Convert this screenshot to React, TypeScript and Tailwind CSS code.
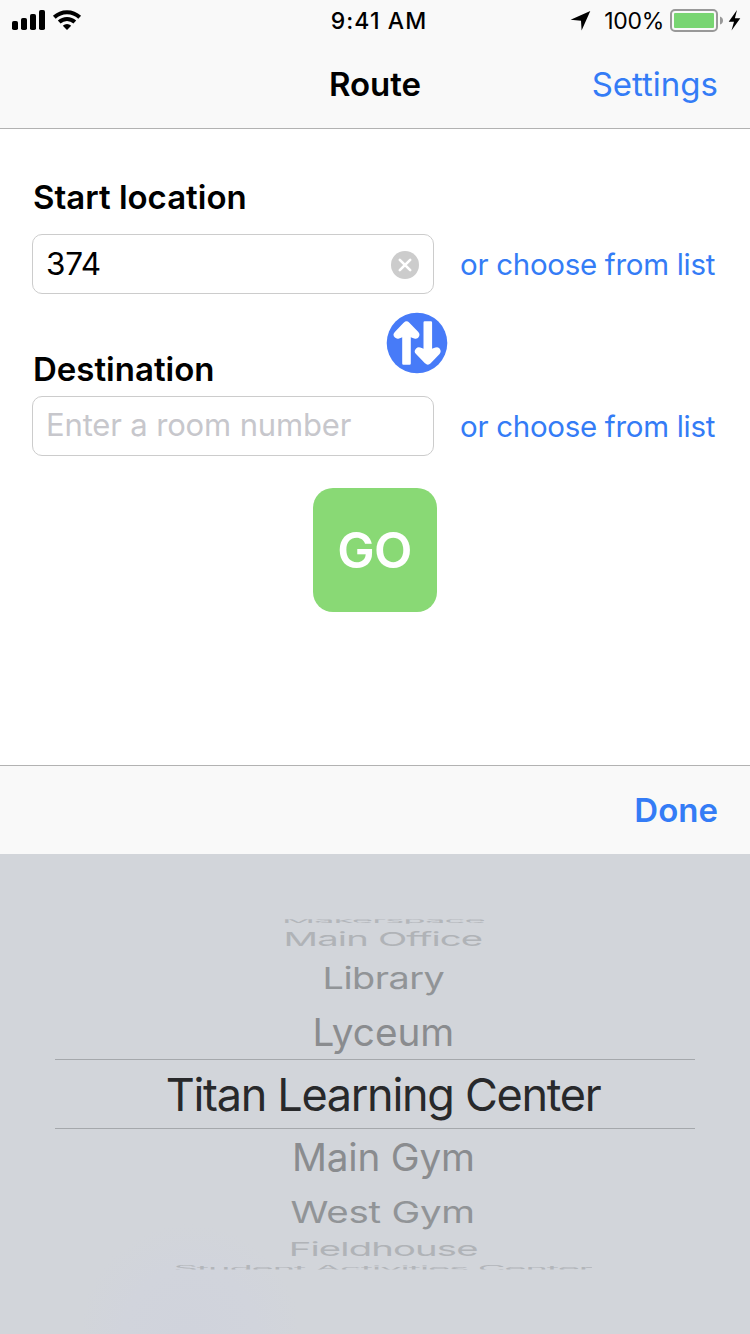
type WheelItem = { label: string; row: string; text: string };

const above: WheelItem[] = [
  { label: "Makerspace", row: "h-[13px]", text: "text-[#b3b6ba] tracking-[-1.3px] [transform:scale(0.815,0.14)] [clip-path:inset(14px_0_0_0)]" },
  { label: "Main Office", row: "h-[24px]", text: "text-[#b0b3b7] tracking-[-1px] [transform:scale(0.85,0.42)]" },
  { label: "Library", row: "h-[52px]", text: "text-[#919497] tracking-[-0.6px] [transform:scale(0.84,0.67)]" },
  { label: "Lyceum", row: "h-[56px]", text: "text-[#8a8c8f] [transform:scale(0.86,0.86)]" },
];

const below: WheelItem[] = [
  { label: "Main Gym", row: "h-[56px] pb-[2px]", text: "text-[#8a8c8f] tracking-[-0.2px] [transform:scale(0.86,0.86)]" },
  { label: "West Gym", row: "h-[52px]", text: "text-[#919497] tracking-[-0.3px] [transform:scale(0.855,0.67)]" },
  { label: "Fieldhouse", row: "h-[25px]", text: "text-[#b0b3b7] tracking-[-1px] [transform:scale(0.85,0.42)]" },
  { label: "Student Activities Center", row: "h-[12px]", text: "text-[#b3b6ba] tracking-[-1.3px] [transform:scale(0.845,0.16)] [clip-path:inset(0_0_16px_0)]" },
];

function WheelRow({ item }: { item: WheelItem }) {
  return (
    <div className={`flex items-center justify-center pl-[16px] ${item.row}`}>
      <span className={`whitespace-nowrap text-[45px] leading-none ${item.text}`}>{item.label}</span>
    </div>
  );
}

function StatusBar() {
  return (
    <div className="grid h-[41px] grid-cols-[1fr_auto_1fr] items-start">
      <svg className="h-[41px] w-[90px]" viewBox="0 0 90 41">
        <rect x="12" y="21" width="6" height="9" rx="1.8" />
        <rect x="21" y="18" width="6" height="12" rx="1.8" />
        <rect x="30" y="14" width="6" height="16" rx="1.8" />
        <rect x="39" y="10" width="6" height="20" rx="1.8" />
        <g fill="none" stroke="#000" strokeWidth="4">
          <path d="M54.3 17.3a18.5 18.5 0 0 1 25.4 0" />
          <path d="M59.2 22a11.5 11.5 0 0 1 15.6 0" />
        </g>
        <path d="M67 30l-4.2-4.3a6.2 6.2 0 0 1 8.4 0z" />
      </svg>
      <span className="pt-[1px] pl-[8px] text-[23px] leading-[41px] font-medium tracking-[1.1px]">9:41 AM</span>
      <div className="flex items-start justify-end">
        <svg className="mr-[10px] h-[41px] w-[24px]" viewBox="570 0 24 41">
          <path d="M590.300 11l-8.700 19.500-.6-9.800-10.400-1z" />
        </svg>
        <span className="pt-[1px] text-[23px] leading-[41px] tracking-[-0.3px]">100%</span>
        <svg className="ml-[2px] h-[41px] w-[84px]" viewBox="666 0 84 41">
          <rect x="671" y="10" width="46" height="21" rx="4" fill="none" stroke="#999" strokeWidth="2" />
          <rect x="674" y="13" width="40" height="15" rx="1" fill="#78d572" />
          <path d="M720 16.500q3 1 3 4t-3 4z" fill="#999" />
          <path d="M737 10l-8.300 11.700h5.300L731.500 30.500l8.800-12.300h-5.400z" />
        </svg>
      </div>
    </div>
  );
}

function SwapIcon() {
  return (
    <svg className="h-[62px] w-[62px]" viewBox="0 0 62 62">
      <circle cx="31" cy="31" r="30.3" fill="#477bf8" />
      <g fill="#fff" stroke="#fff" strokeLinejoin="round">
        <rect x="17.400" y="20" width="6.200" height="31.500" strokeWidth="2.400" />
        <rect x="38.700" y="10.500" width="6.200" height="31.500" strokeWidth="2.400" />
        <path strokeWidth="8" d="M20.500 13.500L11.700 22.700L20.500 19.500L29.500 22.700zM41.800 48.500L32.900 39.300L41.800 42.500L50.700 39.300z" />
      </g>
    </svg>
  );
}

function ClearIcon() {
  return (
    <svg className="h-[28px] w-[28px]" viewBox="0 0 28 28">
      <circle cx="14" cy="14" r="14" fill="#ccc" />
      <path d="M8.800 8.800l10.400 10.400M19.200 8.800L8.800 19.200" stroke="#fff" strokeWidth="2.600" strokeLinecap="round" />
    </svg>
  );
}

function ChooseButton() {
  return (
    <button className="ml-[26px] whitespace-nowrap text-[29.500px] leading-[60px] tracking-[-0.3px] text-[#347cf6]">
      or choose from list
    </button>
  );
}

export default function App() {
  return (
    <div className="flex h-[1334px] w-[750px] flex-col overflow-hidden bg-white font-['Inter',sans-serif] text-black">
      <header className="h-[129px] shrink-0 border-b border-[#b2b2b2] bg-[#f9f9f9]">
        <StatusBar />
        <div className="grid h-[87px] grid-cols-3 items-center">
          <h1 className="col-start-2 justify-self-center text-[33px] font-semibold">Route</h1>
          <button className="mr-[32px] justify-self-end text-[33px] text-[#347cf6]">Settings</button>
        </div>
      </header>

      <main className="h-[636px] shrink-0 pl-8">
        <h2 className="flex h-[105px] items-center pt-[32px] pl-[1px] text-[33px] font-semibold">Start location</h2>
        <div className="flex h-[60px] items-center">
          <div className="flex h-[60px] w-[402px] items-center justify-between rounded-[10px] border border-[#ccc] pr-[14px] pl-[13px]">
            <span className="pb-[1px] text-[31.500px] leading-[56px] tracking-[-0.3px]">374</span>
            <div className="pt-[1px]"><ClearIcon /></div>
          </div>
          <ChooseButton />
        </div>
        <div className="flex h-[102px] w-[416px] items-start justify-between">
          <h2 className="mt-[50px] pl-[1px] text-[33px] leading-[50px] font-semibold">Destination</h2>
          <div className="mt-[18px]"><SwapIcon /></div>
        </div>
        <div className="flex h-[60px] items-center">
          <div className="flex h-[60px] w-[402px] items-center rounded-[10px] border border-[#ccc] pb-[2px] pl-[13px]">
            <span className="text-[31px] leading-[56px] tracking-[-0.15px] text-[#c7c7cc]">Enter a room number</span>
          </div>
          <ChooseButton />
        </div>
        <div className="flex justify-center pt-[32px] pr-8">
          <button className="h-[124px] w-[124px] rounded-[20px] bg-[#89d975] pr-[1px] text-[50px] font-semibold tracking-[-0.8px] text-white">GO</button>
        </div>
      </main>

      <div className="flex h-[89px] shrink-0 items-center justify-end border-t border-[#b2b2b2] bg-[#f9f9f9] pr-8">
        <button className="text-[33px] leading-[88px] font-semibold text-[#347cf6]">Done</button>
      </div>

      <div className="h-[480px] shrink-0 bg-[#d2d5da] bg-[radial-gradient(ellipse_110px_110px_at_190px_480px,#d0d3dc,#d1d4dc_60%,#d2d5da)] pt-[60px]">
        {above.map((item) => <WheelRow key={item.label} item={item} />)}
        <div className="mx-[55px] flex h-[70px] items-center justify-center border-y border-[#a5a8ac] pt-[1px] pl-[16px]">
          <span className="whitespace-nowrap text-[45px] leading-none tracking-[-1.3px] text-[#28292b]">Titan Learning Center</span>
        </div>
        {below.map((item) => <WheelRow key={item.label} item={item} />)}
      </div>
    </div>
  );
}
